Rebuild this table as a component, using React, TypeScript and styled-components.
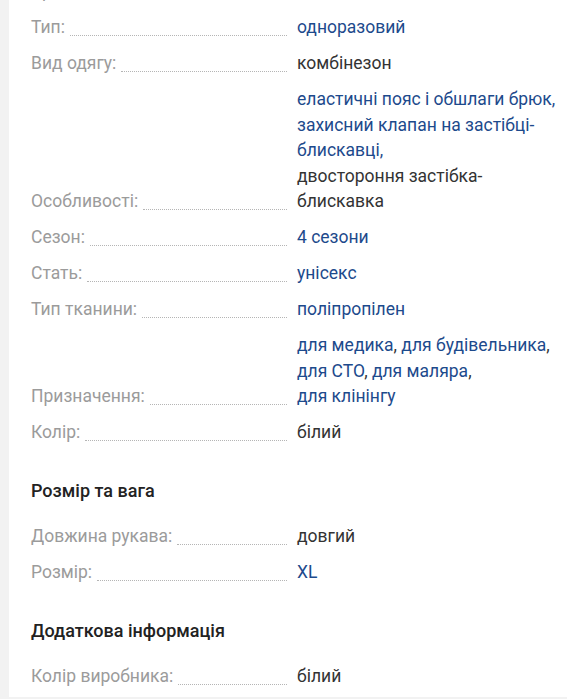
import React from "react";
import styled, { createGlobalStyle } from "styled-components";

const Global = createGlobalStyle`
  html, body {
    margin: 0;
    padding: 0;
    background: #f2f2f2;
    overflow: hidden;
  }
  body {
    font-family: Roboto, "Noto Sans", "Liberation Sans", sans-serif;
    -webkit-font-smoothing: antialiased;
  }
`;

const Card = styled.div`
  margin-left: 9px;
  margin-top: -26px;
  background: #ffffff;
  padding: 0 0 2px 22px;
`;

const Section = styled.section`
  display: flex;
  flex-direction: column;
`;

const Heading = styled.h3`
  margin: 0;
  padding: 28px 0 16px;
  font-size: 18px;
  line-height: 24px;
  font-weight: 500;
  color: #222222;
`;

const Row = styled.div`
  display: grid;
  grid-template-columns: 256px 266px;
  column-gap: 10px;
  align-items: end;
  padding: 5.25px 0;
  font-size: 17.5px;
  line-height: 25.5px;
`;

const Label = styled.div`
  display: flex;
  color: #9b9b9b;
  white-space: nowrap;
`;

const Leader = styled.span`
  flex: 1;
  margin: 0 0 5px 5px;
  border-bottom: 1px dotted #b5b5b5;
`;

const Value = styled.div`
  color: #333333;
`;

const Item = styled.div``;

const Link = styled.a<{ $plain?: boolean; $nowrap?: boolean }>`
  color: ${(p) => (p.$plain ? "#333333" : "#1d4a8c")};
  text-decoration: none;
  white-space: ${(p) => (p.$nowrap ? "nowrap" : "normal")};
`;

type Part = { text: string; plain?: boolean };
type Spec = { label: string; lines: Part[][] };

const Spec = ({ label, lines }: Spec) => (
  <Row>
    <Label>
      {label}
      <Leader />
    </Label>
    <Value>
      {lines.map((parts, i) => (
        <Item key={i}>
          {parts.map((p, j) => (
            <React.Fragment key={j}>
              {j > 0 ? ", " : null}
              <Link $plain={p.plain} $nowrap={parts.length > 1} href="#">
                {p.text}
              </Link>
            </React.Fragment>
          ))}
        </Item>
      ))}
    </Value>
  </Row>
);

const main: Spec[] = [
  { label: "Бренд:", lines: [[{ text: "Ozon" }]] },
  { label: "Тип:", lines: [[{ text: "одноразовий" }]] },
  { label: "Вид одягу:", lines: [[{ text: "комбінезон", plain: true }]] },
  {
    label: "Особливості:",
    lines: [
      [{ text: "еластичні пояс і обшлаги брюк, захисний клапан на застібці-блискавці," }],
      [{ text: "двостороння застібка-блискавка", plain: true }],
    ],
  },
  { label: "Сезон:", lines: [[{ text: "4 сезони" }]] },
  { label: "Стать:", lines: [[{ text: "унісекс" }]] },
  { label: "Тип тканини:", lines: [[{ text: "поліпропілен" }]] },
  {
    label: "Призначення:",
    lines: [
      [
        { text: "для медика" },
        { text: "для будівельника" },
        { text: "для СТО" },
        { text: "для маляра" },
        { text: "для клінінгу" },
      ],
    ],
  },
  { label: "Колір:", lines: [[{ text: "білий", plain: true }]] },
];

const size: Spec[] = [
  { label: "Довжина рукава:", lines: [[{ text: "довгий", plain: true }]] },
  { label: "Розмір:", lines: [[{ text: "XL" }]] },
];

const extra: Spec[] = [
  { label: "Колір виробника:", lines: [[{ text: "білий", plain: true }]] },
];

export default function App() {
  return (
    <>
      <Global />
      <Card>
        <Section>
          {main.map((s) => (
            <Spec key={s.label} {...s} />
          ))}
        </Section>
        <Section>
          <Heading>Розмір та вага</Heading>
          {size.map((s) => (
            <Spec key={s.label} {...s} />
          ))}
        </Section>
        <Section>
          <Heading>Додаткова інформація</Heading>
          {extra.map((s) => (
            <Spec key={s.label} {...s} />
          ))}
        </Section>
      </Card>
    </>
  );
}
